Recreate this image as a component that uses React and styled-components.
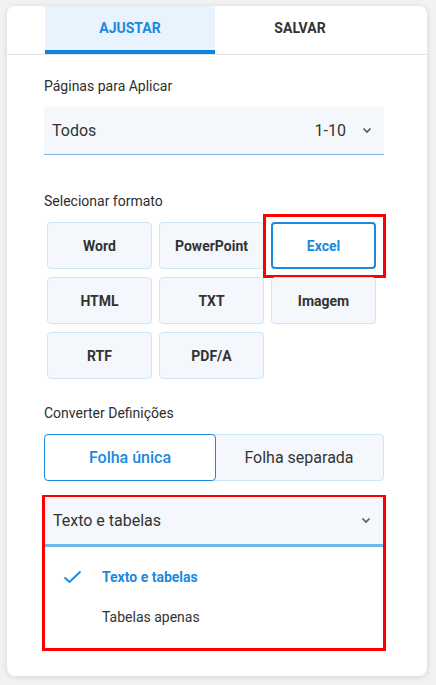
import React from 'react';
import styled, { createGlobalStyle } from 'styled-components';

const GlobalStyle = createGlobalStyle`
    html, body {
        margin: 0;
        background: #f2f2f2;
        font-family: Roboto, "Liberation Sans", sans-serif;
    }
    body {
        padding: 6px 9px 9px 7px;
    }
`

const Card = styled.div`
    background: #fff;
    border-radius: 8px;
    box-shadow: 0 1px 6px rgba(0, 0, 0, .12);
    height: 670px;
    box-sizing: border-box;
`
const Tabs = styled.div`
    display: flex;
    padding-left: 38px;
    border-bottom: 1px solid #e3e3e3;
`
const Tab = styled.div`
    width: 170px;
    height: 44px;
    display: flex;
    align-items: center;
    justify-content: center;
    font-size: 14px;
    font-weight: 700;
    color: ${p => p.active ? '#1a8ae0' : '#333'};
    background: ${p => p.active ? '#e8f3fd' : 'transparent'};
    border-bottom: 4px solid ${p => p.active ? '#0a86dc' : 'transparent'};
`
const Body = styled.div`
    padding: 0 43px 0 37px;
`
const Label = styled.div`
    font-size: 14px;
    color: #2e2e2e;
    height: 20px;
    line-height: 20px;
    margin: ${p => p.top}px 0 ${p => p.bottom}px;
`
const Select = styled.div`
    display: flex;
    align-items: center;
    height: 47px;
    padding: 0 12px 0 8px;
    background: #f4f8fc;
    border-bottom: ${p => p.thick ? '3px solid #6cb9ea' : '1px solid #7db6df'};
    border-radius: ${p => p.thick ? '0' : '3px 3px 0 0'};
    font-size: 16px;
    color: #333;
`
const SelectValue = styled.span`
    flex: 1;
`
const SelectRange = styled.span`
    margin-right: 16px;
`
const Chevron = () => (
    <svg width="10" height="7" viewBox="0 0 10 7">
        <path d="M1.5 1.5 L5 5 L8.5 1.5" fill="none" stroke="#555" strokeWidth="1.6" />
    </svg>
)
const Grid = styled.div`
    display: grid;
    grid-template-columns: repeat(3, 105px);
    grid-auto-rows: 47px;
    column-gap: 7px;
    row-gap: 8px;
    padding-left: 3px;
`
const FormatButton = styled.div`
    position: relative;
    display: flex;
    align-items: center;
    justify-content: center;
    box-sizing: border-box;
    border-radius: 4px;
    font-size: 14px;
    font-weight: 700;
    color: ${p => p.active ? '#1a8ae0' : '#333'};
    background: ${p => p.active ? '#fff' : '#f4f8fc'};
    border: ${p => p.active ? '2px solid #1a8ae0' : '1px solid #cde5f8'};
    ${p => p.highlight && `
        &::after {
            content: '';
            position: absolute;
            top: -10px;
            left: -10px;
            right: -12px;
            bottom: -11px;
            border: 3px solid #f00;
        }
    `}
`
const Segmented = styled.div`
    display: flex;
    height: 47px;
    background: #f4f8fc;
    border: 1px solid #cde5f8;
    border-radius: 4px;
    box-sizing: border-box;
`
const Segment = styled.div`
    flex: 1;
    display: flex;
    align-items: center;
    justify-content: center;
    font-size: 16px;
    font-weight: ${p => p.active ? 500 : 400};
    color: ${p => p.active ? '#1a8ae0' : '#333'};
    background: ${p => p.active ? '#fff' : 'transparent'};
    border: ${p => p.active ? '1.5px solid #1a8ae0' : 'none'};
    border-radius: 4px;
    margin: -1px;
`
const Highlight = styled.div`
    margin: 14px -2px 0;
    border: 3px solid #f00;
    border-top-width: 2px;
`
const Menu = styled.div`
    padding: 10px 0 11px;
`
const Option = styled.div`
    display: flex;
    align-items: center;
    height: 40px;
    font-size: 14px;
    font-weight: ${p => p.active ? 700 : 400};
    color: ${p => p.active ? '#1a8ae0' : '#333'};
`
const CheckSlot = styled.div`
    width: 57px;
    box-sizing: border-box;
    padding-left: 18px;
    display: flex;
`
const Check = () => (
    <svg width="19" height="14" viewBox="0 0 19 14">
        <path d="M1.5 7.5 L6.5 12 L17.5 1.5" fill="none" stroke="#1a8ae0" strokeWidth="2" />
    </svg>
)

const formats = ['Word', 'PowerPoint', 'Excel', 'HTML', 'TXT', 'Imagem', 'RTF', 'PDF/A']

export default function App() {
    return (
        <>
            <GlobalStyle />
            <Card>
                <Tabs>
                    <Tab active>AJUSTAR</Tab>
                    <Tab>SALVAR</Tab>
                </Tabs>
                <Body>
                    <Label top={21} bottom={11}>Páginas para Aplicar</Label>
                    <Select>
                        <SelectValue>Todos</SelectValue>
                        <SelectRange>1-10</SelectRange>
                        <Chevron />
                    </Select>
                    <Label top={36} bottom={11}>Selecionar formato</Label>
                    <Grid>
                        {formats.map(f => (
                            <FormatButton key={f} active={f === 'Excel'} highlight={f === 'Excel'}>
                                {f}
                            </FormatButton>
                        ))}
                    </Grid>
                    <Label top={24} bottom={11}>Converter Definições</Label>
                    <Segmented>
                        <Segment active>Folha única</Segment>
                        <Segment>Folha separada</Segment>
                    </Segmented>
                    <Highlight>
                        <Select thick>
                            <SelectValue>Texto e tabelas</SelectValue>
                            <Chevron />
                        </Select>
                        <Menu>
                            <Option active>
                                <CheckSlot><Check /></CheckSlot>
                                Texto e tabelas
                            </Option>
                            <Option>
                                <CheckSlot />
                                Tabelas apenas
                            </Option>
                        </Menu>
                    </Highlight>
                </Body>
            </Card>
        </>
    );
}
